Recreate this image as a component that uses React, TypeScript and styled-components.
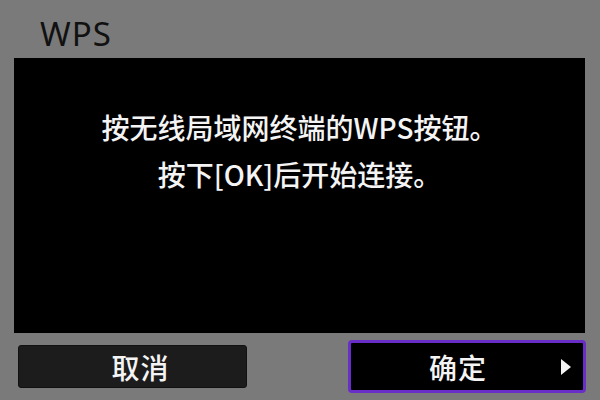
import React from "react";
import styled, { createGlobalStyle } from "styled-components";

const GlobalStyle = createGlobalStyle`
    html, body {
        margin: 0;
        padding: 0;
        background: #7a7a7a;
    }
    * {
        box-sizing: border-box;
    }
`;

const Screen = styled.div`
    display: flex;
    flex-direction: column;
    width: 600px;
    height: 400px;
    background-color: #7a7a7a;
    font-family: "Noto Sans", "Noto Sans CJK SC", sans-serif;
    overflow: hidden;
`;

const Header = styled.header`
    height: 58px;
    padding: 12px 0 0 40px;
    font-size: 33px;
    line-height: 44px;
    color: #111;
    letter-spacing: 1px;
`;

const Panel = styled.div`
    height: 275px;
    margin: 0 15px 0 14px;
    padding-top: 46px;
    background-color: #000;
    color: #f4f4f4;
    text-align: center;
    font-family: "Noto Sans CJK SC", sans-serif;
    font-size: 28px;
    line-height: 47px;
    font-weight: 500;
`;

const Line = styled.p`
    margin: 0;
`;

const Footer = styled.footer`
    flex: 1;
    display: flex;
    align-items: center;
    justify-content: space-between;
    padding: 0 14px 0 18px;
`;

const Button = styled.button<{ $selected?: boolean }>`
    position: relative;
    display: flex;
    align-items: center;
    justify-content: center;
    width: ${p => (p.$selected ? "238px" : "229px")};
    height: ${p => (p.$selected ? "53px" : "43px")};
    padding: ${p => (p.$selected ? "0 18px 0 0" : "0 0 0 16px")};
    border-radius: ${p => (p.$selected ? "4px" : "3px")};
    border: ${p => (p.$selected ? "3px solid #6a2ec8" : "1px solid #111")};
    background-color: ${p => (p.$selected ? "#000" : "#1c1c1c")};
    color: #f4f4f4;
    font-family: "Noto Sans CJK SC", sans-serif;
    font-size: 28px;
    font-weight: 500;
    letter-spacing: 1px;
    cursor: pointer;
`;

const Arrow = styled.span`
    position: absolute;
    right: 12px;
    top: 50%;
    transform: translateY(-50%);
    width: 0;
    height: 0;
    border-top: 8px solid transparent;
    border-bottom: 8px solid transparent;
    border-left: 10px solid #f4f4f4;
`;

function App() {
    return (
        <Screen>
            <GlobalStyle />
            <Header>WPS</Header>
            <Panel>
                <Line>按无线局域网终端的WPS按钮。</Line>
                <Line>按下[OK]后开始连接。</Line>
            </Panel>
            <Footer>
                <Button>取消</Button>
                <Button $selected>
                    确定
                    <Arrow />
                </Button>
            </Footer>
        </Screen>
    );
}

export default App;
